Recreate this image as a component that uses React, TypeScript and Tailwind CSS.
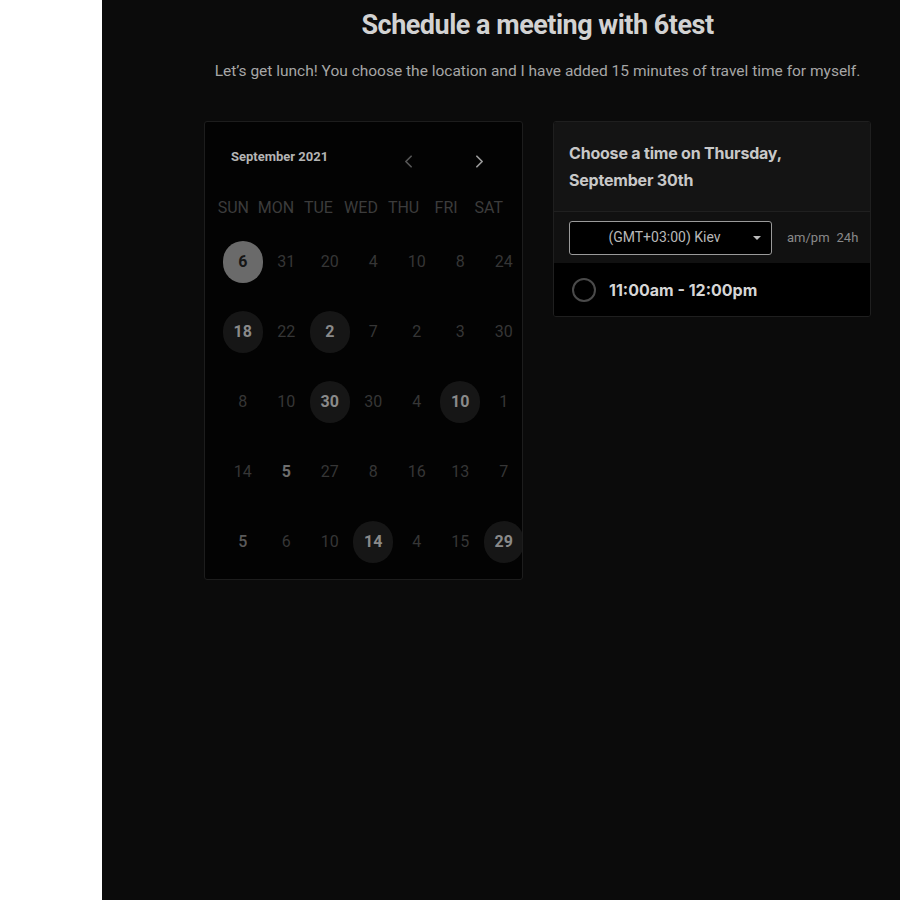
import React from "react"
import { ChevronLeft, ChevronRight } from "lucide-react"

type Day = { n: number; kind?: "active" | "avail" | "sel" | "mid" }

const weeks: Day[][] = [
  [{ n: 6, kind: "sel" }, { n: 31 }, { n: 20 }, { n: 4 }, { n: 10 }, { n: 8 }, { n: 24 }],
  [{ n: 18, kind: "avail" }, { n: 22 }, { n: 2, kind: "avail" }, { n: 7 }, { n: 2 }, { n: 3 }, { n: 30 }],
  [{ n: 8 }, { n: 10 }, { n: 30, kind: "avail" }, { n: 30 }, { n: 4 }, { n: 10, kind: "avail" }, { n: 1 }],
  [{ n: 14 }, { n: 5, kind: "active" }, { n: 27 }, { n: 8 }, { n: 16 }, { n: 13 }, { n: 7 }],
  [{ n: 5, kind: "mid" }, { n: 6 }, { n: 10 }, { n: 14, kind: "avail" }, { n: 4 }, { n: 15 }, { n: 29, kind: "avail" }],
]

const days = ["SUN", "MON", "TUE", "WED", "THU", "FRI", "SAT"]

function DayCell({ d }: { d: Day }) {
  if (d.kind === "sel") {
    return (
      <div className="w-[40px] h-[42px] rounded-full bg-[#6a6a6a] flex items-center justify-center text-[16px] font-bold text-[#161616]">
        {d.n}
      </div>
    )
  }
  if (d.kind === "avail") {
    return (
      <div className="w-[40px] h-[42px] rounded-full bg-[#161616] flex items-center justify-center text-[16px] font-bold text-[#8a8a8a]">
        {d.n}
      </div>
    )
  }
  return (
    <div
      className={
        d.kind === "active"
          ? "text-[16px] font-bold text-[#6e6e6e]"
          : d.kind === "mid"
          ? "text-[16px] font-medium text-[#5a5a5a]"
          : "text-[16px] text-[#363636]"
      }
    >
      {d.n}
    </div>
  )
}

export default function App() {
  return (
    <div className="flex min-h-[900px] w-full font-['Roboto',sans-serif]">
      <div className="w-[102px] bg-white shrink-0" />
      <div className="flex-1 bg-[#0b0b0b]">
        <div className="ml-[102px] w-[667px]">
          {/* heading */}
          <h1 className="pt-[9px] text-center text-[27px] leading-[32px] font-bold text-[#d2d2d2] tracking-[-0.5px]">
            Schedule a meeting with 6test
          </h1>
          <p className="mt-[20px] text-center text-[15.5px] leading-[20px] text-[#a6a6a6]">
            Let’s get lunch! You choose the location and I have added 15 minutes of travel time for myself.
          </p>

          <div className="mt-[40px] flex gap-[30px] items-start">
            {/* calendar */}
            <div className="w-[319px] h-[459px] bg-[#030303] border border-[#1d1d1d] rounded-[3px] overflow-hidden">
              <div className="flex items-center pl-[26px] pt-[20px] h-[50px]">
                <span className="text-[13px] font-bold text-[#b4b4b4] w-[167px]">September 2021</span>
                <ChevronLeft size={21} strokeWidth={2} className="text-[#555] mt-[8px]" />
                <ChevronRight size={21} strokeWidth={2} className="text-[#9a9a9a] ml-[50px] mt-[8px]" />
              </div>
              <div className="grid grid-cols-7 w-[305px] pl-[7px] mt-[25px]">
                {days.map((d) => (
                  <div key={d} className="text-center text-[16px] leading-[22px] text-[#3c3c3c]">
                    {d}
                  </div>
                ))}
              </div>
              <div className="w-[319px] pl-[16px] mt-[8px]">
                {weeks.map((w, i) => (
                  <div key={i} className="grid grid-cols-[repeat(7,43.5px)] h-[70px] items-center">
                    {w.map((d, j) => (
                      <div key={j} className="flex items-center justify-center">
                        <DayCell d={d} />
                      </div>
                    ))}
                  </div>
                ))}
              </div>
            </div>

            {/* time picker */}
            <div className="w-[318px] bg-[#050505] border border-[#1f1f1f] rounded-[3px] overflow-hidden font-['Inter',sans-serif]">
              <div className="bg-[#141414] px-[15px] pt-[18px] pb-[17px] border-b border-[#202020]">
                <div className="text-[16px] leading-[27px] font-bold text-[#c8c8c8] tracking-[-0.2px]">
                  Choose a time on Thursday,
                  <br />
                  September 30th
                </div>
              </div>
              <div className="bg-[#111111] h-[51px] flex items-center pl-[15px]">
                <div className="relative w-[203px] h-[34px] border border-[#9a9a9a] rounded-[3px] bg-black flex items-center justify-center font-['Roboto',sans-serif] text-[14px] text-[#b8b8b8]">
                  <span className="-ml-[12px]">(GMT+03:00) Kiev</span>
                  <span className="absolute right-[10px] top-[14px] w-0 h-0 border-l-[4px] border-r-[4px] border-t-[4px] border-l-transparent border-r-transparent border-t-[#bbb]" />
                </div>
                <span className="ml-[15px] font-['Roboto',sans-serif] text-[13px] text-[#8a8a8a]">am/pm</span>
                <span className="ml-[7px] font-['Roboto',sans-serif] text-[13px] text-[#8a8a8a]">24h</span>
              </div>
              <div className="bg-black h-[53px] flex items-center pl-[18px]">
                <span className="w-[24px] h-[24px] rounded-full border-2 border-[#4a4a4a]" />
                <span className="ml-[13px] text-[16px] font-bold text-[#d6d6d6]">11:00am - 12:00pm</span>
              </div>
            </div>
          </div>
        </div>
      </div>
    </div>
  )
}
